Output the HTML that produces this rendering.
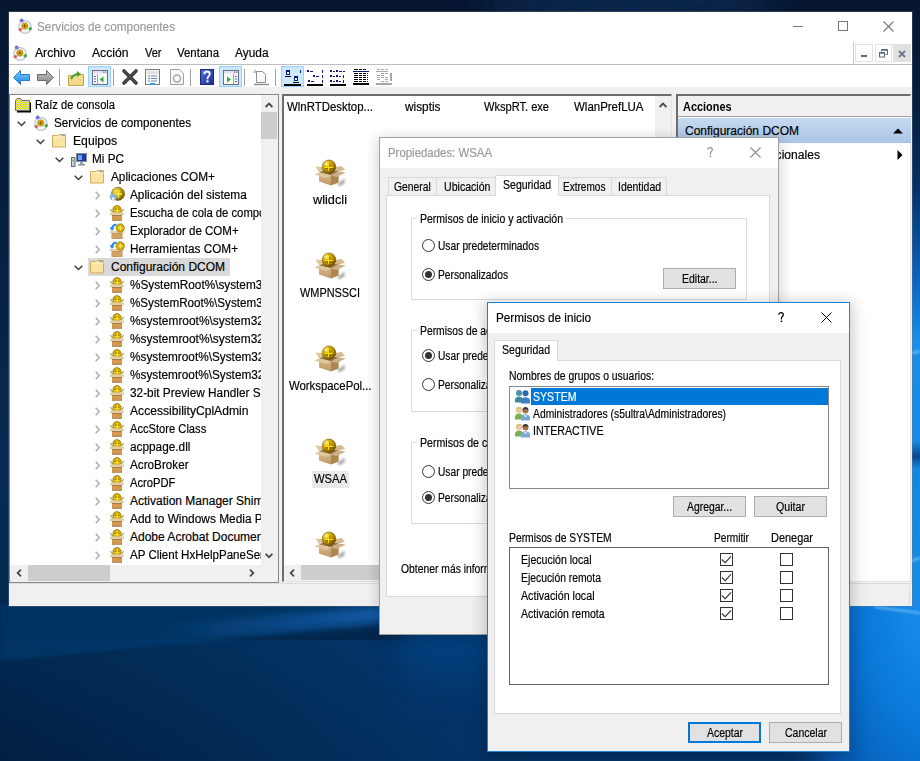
<!DOCTYPE html>
<html><head><meta charset="utf-8">
<style>
*{margin:0;padding:0;box-sizing:border-box}
html,body{width:920px;height:761px;overflow:hidden}
body{position:relative;font-family:"Liberation Sans",sans-serif;font-size:12px;color:#000;background:#0a1a33}
.a{position:absolute;display:block}
.t{position:absolute;white-space:nowrap;line-height:1;transform-origin:0 0;-webkit-text-stroke:.18px currentColor}
svg.a{overflow:visible}
</style></head><body>

<svg class="a" style="left:0px;top:0px;" width="920" height="761" viewBox="0 0 920 761"><defs>
<linearGradient id="dg" x1="0" y1="0" x2="0" y2="761" gradientUnits="userSpaceOnUse">
 <stop offset="0" stop-color="#061630"/><stop offset=".3" stop-color="#07203f"/><stop offset=".6" stop-color="#082a50"/><stop offset=".82" stop-color="#02284e"/><stop offset="1" stop-color="#011c3b"/></linearGradient>
<linearGradient id="sg" x1="150" y1="0" x2="490" y2="0" gradientUnits="userSpaceOnUse"><stop offset="0" stop-color="#1a6ac8" stop-opacity="0"/><stop offset="1" stop-color="#1a70d0" stop-opacity="1"/></linearGradient>
<radialGradient id="rg" cx="930" cy="600" r="330" gradientUnits="userSpaceOnUse" gradientTransform="translate(930 600) scale(.5 1) translate(-930 -600)">
 <stop offset="0" stop-color="#1a90f0"/><stop offset=".4" stop-color="#0a78d8"/><stop offset=".75" stop-color="#0658b0"/><stop offset="1" stop-color="#0a3a80" stop-opacity="0"/></radialGradient>
<linearGradient id="rs" x1="0" y1="0" x2="0" y2="761" gradientUnits="userSpaceOnUse">
 <stop offset="0" stop-color="#061630"/><stop offset=".13" stop-color="#061d3c"/><stop offset=".25" stop-color="#053266"/><stop offset=".37" stop-color="#0a66c4"/><stop offset=".45" stop-color="#1a8ee8"/>
 <stop offset=".58" stop-color="#1a8ae6"/><stop offset=".6" stop-color="#04468e"/><stop offset=".615" stop-color="#1686e0"/><stop offset=".79" stop-color="#1a8ae6"/><stop offset=".9" stop-color="#0a70d0"/><stop offset="1" stop-color="#0550a8"/></linearGradient>
<linearGradient id="vg" x1="0" y1="600" x2="0" y2="720" gradientUnits="userSpaceOnUse"><stop offset="0" stop-color="#04488c"/><stop offset=".35" stop-color="#04488c" stop-opacity=".8"/><stop offset="1" stop-color="#02305f" stop-opacity="0"/></linearGradient>
<linearGradient id="hg" x1="0" y1="0" x2="520" y2="0" gradientUnits="userSpaceOnUse"><stop offset="0" stop-color="#044080" stop-opacity=".1"/><stop offset="1" stop-color="#044080" stop-opacity=".65"/></linearGradient>
<filter id="bl1" x="-50%" y="-50%" width="200%" height="200%"><feGaussianBlur stdDeviation="1.2"/></filter>
<filter id="bl" x="-50%" y="-50%" width="200%" height="200%"><feGaussianBlur stdDeviation="5"/></filter>
<filter id="bl2" x="-50%" y="-50%" width="200%" height="200%"><feGaussianBlur stdDeviation="14"/></filter>
</defs>
<rect width="920" height="761" fill="url(#dg)"/>
<ellipse cx="630" cy="2" rx="150" ry="22" fill="#0d3465" opacity=".55" filter="url(#bl2)"/>
<polygon points="0,604 920,604 920,560 490,614 0,661" fill="#03335f" filter="url(#bl1)"/>
<polygon points="150,644 490,612 490,596 150,626" fill="url(#sg)" filter="url(#bl)"/>
<polygon points="400,610 520,600 520,700 400,725" fill="url(#vg)" filter="url(#bl2)"/>
<rect x="0" y="640" width="920" height="121" fill="url(#hg)"/>
<rect x="600" y="0" width="400" height="800" fill="url(#rg)"/>
<rect x="906" y="0" width="14" height="606" fill="url(#rs)"/>
<path d="M906 355l14-4M906 563l14-5" stroke="#8fd0ff" stroke-width="2" opacity=".7" filter="url(#bl1)"/>
<path d="M875 607l45 6" stroke="#9ad8ff" stroke-width="2" opacity=".6" filter="url(#bl1)"/>
</svg>
<div class="a" style="left:8px;top:11px;width:905px;height:596px;background:rgba(110,120,140,.35);"></div>
<div class="a" style="left:9px;top:12px;width:903px;height:594px;background:#f0f0f0;"></div>
<div class="a" style="left:9px;top:12px;width:903px;height:52px;background:#fff;"></div>
<div class="a" style="left:9px;top:64px;width:903px;height:1px;background:#bdbdbd;"></div>
<div class="a" style="left:9px;top:65px;width:903px;height:22px;background:#fff;"></div>
<div class="a" style="left:9px;top:583px;width:903px;height:1px;background:#dcdcdc;"></div>
<div class="a" style="left:909px;top:585px;width:1px;height:20px;background:#dcdcdc;"></div>
<svg class="a" style="left:17px;top:18px;" width="16" height="16" viewBox="0 0 16 16"><circle cx="8" cy="9" r="6.3" fill="#f2f3f6" stroke="#c3c8d2" stroke-width="1.3"/>
<circle cx="7.8" cy="8" r="3.1" fill="#f0c000" stroke="#9a7000" stroke-width=".7"/>
<path d="M5.9 8h3.8M7.8 6.1v3.8" stroke="#6a4500" stroke-width=".9"/>
<circle cx="4.7" cy="2.4" r="1.9" fill="#6c70e0"/>
<circle cx="3.3" cy="11.6" r="1.7" fill="#d85c5c"/>
<circle cx="13.2" cy="10.8" r="1.7" fill="#44a844"/></svg>
<div class="t" style="left:37px;top:21px;font-size:12px;color:#9a9a9a;transform:scaleX(0.9807);">Servicios de componentes</div>
<div class="a" style="left:793px;top:26px;width:10px;height:1px;background:#777;"></div>
<div class="a" style="left:838px;top:21px;width:10px;height:10px;border:1px solid #777;"></div>
<svg class="a" style="left:883px;top:21px;" width="11" height="11" viewBox="0 0 11 11"><path d="M.5 .5l10 10M10.5 .5l-10 10" stroke="#777" stroke-width="1.1"/></svg>
<svg class="a" style="left:12px;top:45px;" width="16" height="16" viewBox="0 0 16 16"><circle cx="8" cy="9" r="6.3" fill="#f2f3f6" stroke="#c3c8d2" stroke-width="1.3"/>
<circle cx="7.8" cy="8" r="3.1" fill="#f0c000" stroke="#9a7000" stroke-width=".7"/>
<path d="M5.9 8h3.8M7.8 6.1v3.8" stroke="#6a4500" stroke-width=".9"/>
<circle cx="4.7" cy="2.4" r="1.9" fill="#6c70e0"/>
<circle cx="3.3" cy="11.6" r="1.7" fill="#d85c5c"/>
<circle cx="13.2" cy="10.8" r="1.7" fill="#44a844"/></svg>
<div class="t" style="left:35px;top:47px;font-size:12px;color:#000;transform:scaleX(1.0121);">Archivo</div>
<div class="t" style="left:92px;top:47px;font-size:12px;color:#000;transform:scaleX(1.0134);">Acci&oacute;n</div>
<div class="t" style="left:145px;top:47px;font-size:12px;color:#000;transform:scaleX(0.9159);">Ver</div>
<div class="t" style="left:177px;top:47px;font-size:12px;color:#000;transform:scaleX(0.9539);">Ventana</div>
<div class="t" style="left:235px;top:47px;font-size:12px;color:#000;transform:scaleX(0.9912);">Ayuda</div>
<div class="a" style="left:853px;top:42px;width:1px;height:22px;background:#c9c9c9;"></div>
<div class="a" style="left:855px;top:44px;width:18px;height:18px;border:1px solid #e3e3e3;background:#fff;"></div>
<div class="a" style="left:861px;top:55px;width:6px;height:2px;background:#5e6c80;"></div>
<div class="a" style="left:875px;top:44px;width:17px;height:18px;border:1px solid #e3e3e3;background:#fff;"></div>
<svg class="a" style="left:879px;top:49px;" width="9" height="9" viewBox="0 0 9 9"><path d="M2.5 2.5v-2h6v5h-2" fill="none" stroke="#5e6c80"/><rect x=".5" y="3.5" width="5" height="4.5" fill="none" stroke="#5e6c80"/><path d="M.5 4h5M2.5 1h6" stroke="#5e6c80" stroke-width="1.5"/></svg>
<div class="a" style="left:893px;top:44px;width:18px;height:18px;background:#e1e1e1;"></div>
<svg class="a" style="left:898px;top:50px;" width="8" height="8" viewBox="0 0 8 8"><path d="M1 1l6 6M7 1l-6 6" stroke="#6c7a90" stroke-width="1.8"/></svg>
<svg class="a" style="left:13px;top:70px;" width="17" height="15" viewBox="0 0 17 15"><defs><linearGradient id="ab" x1="0" y1="0" x2="0" y2="1"><stop offset="0" stop-color="#7cd0ff"/><stop offset="1" stop-color="#1a80e0"/></linearGradient></defs><path d="M.5 7.5l7-7v4h9v6h-9v4z" fill="url(#ab)" stroke="#2a7ad0"/></svg>
<svg class="a" style="left:37px;top:70px;" width="17" height="15" viewBox="0 0 17 15"><defs><linearGradient id="ag" x1="0" y1="0" x2="0" y2="1"><stop offset="0" stop-color="#c8c8c8"/><stop offset="1" stop-color="#808080"/></linearGradient></defs><path d="M16.5 7.5l-7-7v4h-9v6h9v4z" fill="url(#ag)" stroke="#6a6a6a"/></svg>
<div class="a" style="left:59px;top:69px;width:1px;height:17px;background:#a0a0a0;"></div>
<svg class="a" style="left:68px;top:70px;" width="16" height="16" viewBox="0 0 16 16"><path d="M.5 5.5h5l1-1h9v11h-15z" fill="#f4d88a" stroke="#c8a050"/><path d="M3 9c2-4 5-5 8-5" stroke="#40a030" stroke-width="2" fill="none"/><path d="M9 1l4 3-4 3z" fill="#40a030"/></svg>
<div class="a" style="left:88px;top:66px;width:23px;height:21px;border:1px solid #99d1ff;background:#cce8ff;"></div>
<svg class="a" style="left:92px;top:70px;" width="16" height="15" viewBox="0 0 16 15"><rect x=".5" y=".5" width="15" height="14" fill="#fafafa" stroke="#6a7080"/><rect x="1" y="1" width="14" height="2.5" fill="#dfe3ea"/><rect x="11" y="1.5" width="1.2" height="1.2" fill="#6a7080"/><rect x="13" y="1.5" width="1.2" height="1.2" fill="#6a7080"/><path d="M5.5 4v10" stroke="#9aa0aa"/><path d="M2 6.5h2M2 9h2M2 11.5h2" stroke="#3a70d0"/><path d="M11.5 6.5l-4 3 4 3z" fill="#30b030"/></svg>
<div class="a" style="left:113px;top:69px;width:1px;height:17px;background:#a0a0a0;"></div>
<svg class="a" style="left:122px;top:69px;" width="16" height="16" viewBox="0 0 16 16"><path d="M2 2l12 12M14 2L2 14" stroke="#3c3c3c" stroke-width="3.6" stroke-linecap="round"/><path d="M2.5 2l11 11M13.5 2l-11 11" stroke="#6a6a6a" stroke-width="1" stroke-linecap="round" opacity=".6"/></svg>
<svg class="a" style="left:145px;top:69px;" width="15" height="16" viewBox="0 0 15 16"><rect x=".5" y=".5" width="14" height="15" fill="#f8f8f8" stroke="#7a7a7a"/><rect x="2" y="2" width="11" height="3" fill="#e0e0e0"/><path d="M3 7h2M6 7h6M3 9.5h2M6 9.5h6M3 12h2M6 12h6" stroke="#6a8ac0"/><rect x="5" y="14" width="5" height="2" fill="#30a0e0"/></svg>
<svg class="a" style="left:170px;top:69px;" width="14" height="16" viewBox="0 0 14 16"><path d="M.5 .5h9l4 4v11H.5z" fill="#f8f8f8" stroke="#a0a0a0"/><circle cx="7" cy="9.5" r="3.5" fill="none" stroke="#a8a8a8" stroke-width="1.5"/></svg>
<div class="a" style="left:190px;top:69px;width:1px;height:17px;background:#a0a0a0;"></div>
<svg class="a" style="left:200px;top:69px;" width="14" height="16" viewBox="0 0 14 16"><defs><linearGradient id="hb" x1="0" y1="0" x2="1" y2="1"><stop offset="0" stop-color="#4a70d8"/><stop offset="1" stop-color="#1a2c90"/></linearGradient></defs><rect x=".5" y=".5" width="13" height="15" fill="url(#hb)" stroke="#1a2a80"/><path d="M4.3 5.2C4.3 3.3 5.5 2.5 7 2.5s2.8.8 2.8 2.5c0 2-2.3 2.3-2.3 4.5v.8" fill="none" stroke="#fff" stroke-width="1.8"/><rect x="6.4" y="11.3" width="2.1" height="2.1" fill="#fff"/></svg>
<div class="a" style="left:219px;top:66px;width:23px;height:21px;border:1px solid #99d1ff;background:#cce8ff;"></div>
<svg class="a" style="left:223px;top:70px;" width="16" height="15" viewBox="0 0 16 15"><rect x=".5" y=".5" width="15" height="14" fill="#fafafa" stroke="#6a7080"/><rect x="1" y="1" width="14" height="2.5" fill="#dfe3ea"/><rect x="11" y="1.5" width="1.2" height="1.2" fill="#6a7080"/><rect x="13" y="1.5" width="1.2" height="1.2" fill="#6a7080"/><path d="M10.5 4v10" stroke="#9aa0aa"/><path d="M12 6.5h2M12 9h2M12 11.5h2" stroke="#3a70d0"/><path d="M4 6.5l4 3-4 3z" fill="#30b030"/></svg>
<div class="a" style="left:244px;top:69px;width:1px;height:17px;background:#a0a0a0;"></div>
<svg class="a" style="left:253px;top:69px;" width="16" height="16" viewBox="0 0 16 16"><path d="M3.5 2.5h6l3 3v8h-9z" fill="#fafafa" stroke="#909090"/><path d="M1 15.5h15" stroke="#909090" stroke-width="1.5"/><path d="M2 1l2 2M0 3h3" stroke="#909090"/></svg>
<div class="a" style="left:275px;top:69px;width:1px;height:17px;background:#a0a0a0;"></div>
<div class="a" style="left:281px;top:66px;width:23px;height:21px;border:1px solid #99d1ff;background:#cce8ff;"></div>
<svg class="a" style="left:285px;top:69px;" width="16" height="16" viewBox="0 0 16 16"><g shape-rendering="crispEdges"><rect x="1" y="1" width="4" height="5" fill="#0a1a80"/><rect x="2" y="3" width="1.5" height="2" fill="#fff"/><rect x="0" y="7" width="6" height="1" fill="#000"/><rect x="-1" y="15" width="17" height="2" fill="#000"/><rect x="15" y="1" width="1" height="3" fill="#0a1a80"/><rect x="9" y="7" width="4" height="5" fill="#0a1a80"/><rect x="10" y="9" width="1.5" height="2" fill="#fff"/><rect x="8" y="13" width="6" height="1" fill="#000"/></g></svg>
<svg class="a" style="left:307px;top:69px;" width="16" height="16" viewBox="0 0 16 16"><g shape-rendering="crispEdges"><rect x="0" y="1" width="2" height="2" fill="#0a1a80"/><rect x="3" y="1.5" width="3" height="1" fill="#0a1a80"/><rect x="15" y="1" width="1" height="3" fill="#0a1a80"/><rect x="6" y="6" width="2" height="2" fill="#0a1a80"/><rect x="9" y="6.5" width="3" height="1" fill="#0a1a80"/><rect x="15" y="6" width="1" height="3" fill="#0a1a80"/><rect x="1" y="11" width="2" height="2" fill="#0a1a80"/><rect x="4" y="11.5" width="3" height="1" fill="#0a1a80"/><rect x="15" y="11" width="1" height="3" fill="#0a1a80"/><rect x="0" y="15" width="16" height="2" fill="#000"/></g></svg>
<svg class="a" style="left:330px;top:69px;" width="16" height="16" viewBox="0 0 16 16"><g shape-rendering="crispEdges"><rect x="0" y="1" width="2" height="2" fill="#0a1a80"/><rect x="3" y="1.5" width="2" height="1" fill="#0a1a80"/><rect x="6" y="1" width="2" height="2" fill="#0a1a80"/><rect x="9" y="1.5" width="3" height="1" fill="#0a1a80"/><rect x="13" y="2" width="2" height="1" fill="#0a1a80"/><rect x="0" y="6" width="2" height="2" fill="#0a1a80"/><rect x="3" y="6.5" width="2" height="1" fill="#0a1a80"/><rect x="6" y="6" width="2" height="2" fill="#0a1a80"/><rect x="9" y="6.5" width="2" height="1" fill="#0a1a80"/><rect x="13" y="6" width="1" height="3" fill="#0a1a80"/><rect x="0" y="11" width="2" height="2" fill="#0a1a80"/><rect x="3" y="11.5" width="2" height="1" fill="#0a1a80"/><rect x="6" y="11" width="2" height="2" fill="#0a1a80"/><rect x="9" y="11.5" width="2" height="1" fill="#0a1a80"/><rect x="13" y="11" width="1" height="3" fill="#0a1a80"/><rect x="0" y="15" width="16" height="2" fill="#000"/></g></svg>
<svg class="a" style="left:353px;top:69px;" width="16" height="16" viewBox="0 0 16 16"><g shape-rendering="crispEdges"><rect x="1" y="0" width="4" height="1" fill="#000"/><rect x="6" y="0" width="3" height="1" fill="#000"/><rect x="10" y="0" width="3" height="1" fill="#000"/><rect x="0" y="2" width="16" height="1" fill="#0a1a80"/><rect x="1" y="4" width="4" height="1" fill="#000"/><rect x="6" y="4" width="3" height="1" fill="#000"/><rect x="10" y="4" width="3" height="1" fill="#000"/><rect x="14" y="4" width="1" height="1" fill="#0a1a80"/><rect x="1" y="6" width="4" height="1" fill="#000"/><rect x="6" y="6" width="3" height="1" fill="#000"/><rect x="10" y="6" width="3" height="1" fill="#000"/><rect x="14" y="6" width="1" height="1" fill="#0a1a80"/><rect x="1" y="8" width="4" height="1" fill="#000"/><rect x="6" y="8" width="3" height="1" fill="#000"/><rect x="10" y="8" width="3" height="1" fill="#000"/><rect x="14" y="8" width="1" height="1" fill="#0a1a80"/><rect x="1" y="10" width="4" height="1" fill="#000"/><rect x="6" y="10" width="3" height="1" fill="#000"/><rect x="10" y="10" width="3" height="1" fill="#000"/><rect x="14" y="10" width="1" height="1" fill="#0a1a80"/><rect x="1" y="12" width="4" height="1" fill="#000"/><rect x="6" y="12" width="3" height="1" fill="#000"/><rect x="10" y="12" width="3" height="1" fill="#000"/><rect x="14" y="12" width="1" height="1" fill="#0a1a80"/><rect x="0" y="14" width="16" height="2" fill="#000"/></g></svg>
<svg class="a" style="left:376px;top:69px;" width="16" height="16" viewBox="0 0 16 16"><g shape-rendering="crispEdges"><rect x="1" y="0" width="3" height="1" fill="#a8a8a8"/><rect x="5" y="0" width="3" height="1" fill="#a8a8a8"/><rect x="9" y="0" width="3" height="1" fill="#a8a8a8"/><rect x="0" y="2" width="12" height="1" fill="#a8a8a8"/><rect x="5" y="4" width="3" height="1" fill="#a8a8a8"/><rect x="9" y="4" width="3" height="1" fill="#a8a8a8"/><rect x="1" y="6" width="3" height="1" fill="#a8a8a8"/><rect x="5" y="6" width="3" height="1" fill="#a8a8a8"/><rect x="1" y="8" width="3" height="1" fill="#a8a8a8"/><rect x="5" y="8" width="3" height="1" fill="#a8a8a8"/><rect x="9" y="8" width="3" height="1" fill="#a8a8a8"/><rect x="1" y="10" width="3" height="1" fill="#a8a8a8"/><rect x="9" y="10" width="3" height="1" fill="#a8a8a8"/><rect x="5" y="12" width="3" height="1" fill="#a8a8a8"/><rect x="9" y="12" width="3" height="1" fill="#a8a8a8"/><rect x="14" y="4" width="1.5" height="8" fill="#a8a8a8"/><rect x="0" y="14" width="16" height="2" fill="#a8a8a8"/></g></svg>
<div class="a" style="left:9px;top:94px;width:270px;height:489px;border:1px solid #828790;background:#fff;"></div>
<div class="a" style="left:10px;top:95px;width:251px;height:470px;overflow:hidden">
<svg class="a" style="left:4px;top:2px;" width="16" height="16" viewBox="0 0 16 16"><defs><pattern id="chk" width="2" height="2" patternUnits="userSpaceOnUse"><rect width="2" height="2" fill="#f4f400"/><rect width="1" height="1" fill="#c8c8a0"/><rect x="1" y="1" width="1" height="1" fill="#c8c8a0"/></pattern></defs>
<path d="M2 14.5V4.5l1.5-2h3.5l1.5 2h7.5v10z" fill="#000" transform="translate(1 1)"/>
<path d="M1.5 13.5V3.5l1.5-2h3.5l1.5 2h7.5v10z" fill="url(#chk)" stroke="#707070" stroke-width="1"/></svg>
<div class="t" style="left:25px;top:4px;font-size:12px;color:#000;transform:scaleX(0.9299);">Ra&iacute;z de consola</div>
<svg class="a" style="left:7px;top:26px;" width="9" height="6" viewBox="0 0 9 6"><path d="M.7 .7l3.8 3.8 3.8-3.8" fill="none" stroke="#404040" stroke-width="1.5"/></svg>
<svg class="a" style="left:23px;top:20px;" width="16" height="16" viewBox="0 0 16 16"><circle cx="8" cy="9" r="6.3" fill="#f2f3f6" stroke="#c3c8d2" stroke-width="1.3"/>
<circle cx="7.8" cy="8" r="3.1" fill="#f0c000" stroke="#9a7000" stroke-width=".7"/>
<path d="M5.9 8h3.8M7.8 6.1v3.8" stroke="#6a4500" stroke-width=".9"/>
<circle cx="4.7" cy="2.4" r="1.9" fill="#6c70e0"/>
<circle cx="3.3" cy="11.6" r="1.7" fill="#d85c5c"/>
<circle cx="13.2" cy="10.8" r="1.7" fill="#44a844"/></svg>
<div class="t" style="left:44px;top:22px;font-size:12px;color:#000;transform:scaleX(0.9736);">Servicios de componentes</div>
<svg class="a" style="left:26px;top:44px;" width="9" height="6" viewBox="0 0 9 6"><path d="M.7 .7l3.8 3.8 3.8-3.8" fill="none" stroke="#404040" stroke-width="1.5"/></svg>
<svg class="a" style="left:42px;top:38px;" width="16" height="16" viewBox="0 0 16 16"><path d="M.5 2.5h5.5l1-1h6.5v12.5h-13z" fill="#f8e3a0" stroke="#d4ac58"/>
<path d="M1 4h12.5" stroke="#fdf3d0" stroke-width="1"/><rect x="9.5" y="2" width="3" height="1.2" fill="#6aa8e8"/></svg>
<div class="t" style="left:63px;top:40px;font-size:12px;color:#000;transform:scaleX(1.0148);">Equipos</div>
<svg class="a" style="left:45px;top:62px;" width="9" height="6" viewBox="0 0 9 6"><path d="M.7 .7l3.8 3.8 3.8-3.8" fill="none" stroke="#404040" stroke-width="1.5"/></svg>
<svg class="a" style="left:61px;top:56px;" width="16" height="16" viewBox="0 0 16 16"><rect x="5.5" y="2.5" width="10" height="8" fill="#1a3ca8" stroke="#8a8f98"/>
<rect x="7" y="4" width="4" height="5" fill="#6fa0ff"/>
<rect x="9" y="11" width="3" height="2" fill="#9aa0a8"/><rect x="7" y="13" width="7" height="1.5" fill="#8a9098"/>
<rect x="0.5" y="6.5" width="3.5" height="9" fill="#c8ccd0" stroke="#6a6e74"/>
<rect x="1.5" y="9" width="1.5" height="1.2" fill="#30c030"/></svg>
<div class="t" style="left:82px;top:58px;font-size:12px;color:#000;transform:scaleX(0.9794);">Mi PC</div>
<svg class="a" style="left:64px;top:80px;" width="9" height="6" viewBox="0 0 9 6"><path d="M.7 .7l3.8 3.8 3.8-3.8" fill="none" stroke="#404040" stroke-width="1.5"/></svg>
<svg class="a" style="left:80px;top:74px;" width="16" height="16" viewBox="0 0 16 16"><path d="M.5 2.5h5.5l1-1h6.5v12.5h-13z" fill="#f8e3a0" stroke="#d4ac58"/>
<path d="M1 4h12.5" stroke="#fdf3d0" stroke-width="1"/><rect x="9.5" y="2" width="3" height="1.2" fill="#6aa8e8"/></svg>
<div class="t" style="left:101px;top:76px;font-size:12px;color:#000;transform:scaleX(0.9837);">Aplicaciones COM+</div>
<svg class="a" style="left:85px;top:96px;" width="6" height="9" viewBox="0 0 6 9"><path d="M.7 .7l3.6 3.8-3.6 3.8" fill="none" stroke="#a6a6a6" stroke-width="1.3"/></svg>
<svg class="a" style="left:99px;top:92px;" width="16" height="16" viewBox="0 0 16 16"><defs><radialGradient id="sg2" cx=".35" cy=".3" r=".8"><stop offset="0" stop-color="#f8e060"/><stop offset=".5" stop-color="#c09800"/><stop offset="1" stop-color="#6a5000"/></radialGradient></defs>
<circle cx="9" cy="6.8" r="6.6" fill="url(#sg2)" stroke="#5a4400" stroke-width=".5"/>
<path d="M5.5 7h7.5M9.5 3v7.8" stroke="#fff040" stroke-width="1.5"/>
<path d="M4 9.2l.8 1.5 1.6-.5.3 1.6 1.5.6-.8 1.4.8 1.4-1.5.6-.3 1.6-1.6-.5L4 18l-.8-1.5-1.6.5-.3-1.6-1.5-.6.8-1.4-.8-1.4 1.5-.6.3-1.6 1.6.5z" fill="#8ab4e0" transform="translate(.5 -2.5) scale(.92)"/>
<circle cx="4.2" cy="11.5" r="1.2" fill="#fff"/></svg>
<div class="t" style="left:120px;top:94px;font-size:12px;color:#000;transform:scaleX(0.9830);">Aplicaci&oacute;n del sistema</div>
<svg class="a" style="left:85px;top:114px;" width="6" height="9" viewBox="0 0 6 9"><path d="M.7 .7l3.6 3.8-3.6 3.8" fill="none" stroke="#a6a6a6" stroke-width="1.3"/></svg>
<svg class="a" style="left:99px;top:110px;" width="16" height="16" viewBox="0 0 16 16"><path d="M1.3 4.2L4 7.5M14.7 4.2L12 7.5" stroke="#b89060" stroke-width="1.1"/>
<circle cx="8" cy="4.8" r="4.2" fill="#d8b000" stroke="#7a6000" stroke-width=".6"/>
<path d="M5.5 5.2h5M8.2 2.3v5" stroke="#f8e830" stroke-width="1.1"/><path d="M5.5 4.2h2M9 4.2h1.5" stroke="#6a4a00" stroke-width=".7"/>
<rect x="1" y="7.5" width="14" height="2.6" fill="#e2cda6"/>
<rect x="3" y="10.1" width="10" height="5.5" fill="#d49a52"/>
<path d="M3 10.5h10" stroke="#9a7040" stroke-width=".8"/><path d="M3 15.3h10" stroke="#9a7040" stroke-width=".7"/></svg>
<div class="t" style="left:120px;top:112px;font-size:12px;color:#000;transform:scaleX(0.9390);">Escucha de cola de componentes</div>
<svg class="a" style="left:85px;top:132px;" width="6" height="9" viewBox="0 0 6 9"><path d="M.7 .7l3.6 3.8-3.6 3.8" fill="none" stroke="#a6a6a6" stroke-width="1.3"/></svg>
<svg class="a" style="left:99px;top:128px;" width="16" height="16" viewBox="0 0 16 16"><rect x="1" y="8" width="14" height="2" fill="#e6cfa8"/>
<rect x="2.5" y="10" width="11" height="6" fill="#c9965a"/>
<path d="M2.5 12h11M2.5 14h11" stroke="#e0b880" stroke-width=".7"/>
<circle cx="11.2" cy="5" r="4.2" fill="#d6ac00" stroke="#8a6800" stroke-width=".6"/>
<path d="M8.8 5h4.8M11.2 2.6v4.8" stroke="#fff070" stroke-width="1.1"/>
<path d="M7.5 1.8C5 1.5 3.5 3 3 5.5" fill="none" stroke="#2a86e0" stroke-width="2"/>
<path d="M0.5 4.5l2.5 3.5 2.5-3.2z" fill="#2a86e0"/></svg>
<div class="t" style="left:120px;top:130px;font-size:12px;color:#000;transform:scaleX(0.9615);">Explorador de COM+</div>
<svg class="a" style="left:85px;top:150px;" width="6" height="9" viewBox="0 0 6 9"><path d="M.7 .7l3.6 3.8-3.6 3.8" fill="none" stroke="#a6a6a6" stroke-width="1.3"/></svg>
<svg class="a" style="left:99px;top:146px;" width="16" height="16" viewBox="0 0 16 16"><rect x="1" y="8" width="14" height="2" fill="#e6cfa8"/>
<rect x="2.5" y="10" width="11" height="6" fill="#c9965a"/>
<path d="M2.5 12h11M2.5 14h11" stroke="#e0b880" stroke-width=".7"/>
<circle cx="11.2" cy="5" r="4.2" fill="#d6ac00" stroke="#8a6800" stroke-width=".6"/>
<path d="M8.8 5h4.8M11.2 2.6v4.8" stroke="#fff070" stroke-width="1.1"/>
<path d="M7.5 1.8C5 1.5 3.5 3 3 5.5" fill="none" stroke="#2a86e0" stroke-width="2"/>
<path d="M0.5 4.5l2.5 3.5 2.5-3.2z" fill="#2a86e0"/></svg>
<div class="t" style="left:120px;top:148px;font-size:12px;color:#000;transform:scaleX(0.9785);">Herramientas COM+</div>
<div class="a" style="left:78px;top:163px;width:142px;height:18px;background:#d9d9d9;"></div>
<svg class="a" style="left:64px;top:170px;" width="9" height="6" viewBox="0 0 9 6"><path d="M.7 .7l3.8 3.8 3.8-3.8" fill="none" stroke="#404040" stroke-width="1.5"/></svg>
<svg class="a" style="left:80px;top:164px;" width="16" height="16" viewBox="0 0 16 16"><path d="M.5 2.5h5.5l1-1h6.5v12.5h-13z" fill="#f8e3a0" stroke="#d4ac58"/>
<path d="M1 4h12.5" stroke="#fdf3d0" stroke-width="1"/><rect x="9.5" y="2" width="3" height="1.2" fill="#6aa8e8"/></svg>
<div class="t" style="left:101px;top:166px;font-size:12px;color:#000;">Configuraci&oacute;n DCOM</div>
<svg class="a" style="left:85px;top:186px;" width="6" height="9" viewBox="0 0 6 9"><path d="M.7 .7l3.6 3.8-3.6 3.8" fill="none" stroke="#a6a6a6" stroke-width="1.3"/></svg>
<svg class="a" style="left:99px;top:182px;" width="16" height="16" viewBox="0 0 16 16"><path d="M1.3 4.2L4 7.5M14.7 4.2L12 7.5" stroke="#b89060" stroke-width="1.1"/>
<circle cx="8" cy="4.8" r="4.2" fill="#d8b000" stroke="#7a6000" stroke-width=".6"/>
<path d="M5.5 5.2h5M8.2 2.3v5" stroke="#f8e830" stroke-width="1.1"/><path d="M5.5 4.2h2M9 4.2h1.5" stroke="#6a4a00" stroke-width=".7"/>
<rect x="1" y="7.5" width="14" height="2.6" fill="#e2cda6"/>
<rect x="3" y="10.1" width="10" height="5.5" fill="#d49a52"/>
<path d="M3 10.5h10" stroke="#9a7040" stroke-width=".8"/><path d="M3 15.3h10" stroke="#9a7040" stroke-width=".7"/></svg>
<div class="t" style="left:120px;top:184px;font-size:12px;color:#000;transform:scaleX(0.9820);">%SystemRoot%\system32\</div>
<svg class="a" style="left:85px;top:204px;" width="6" height="9" viewBox="0 0 6 9"><path d="M.7 .7l3.6 3.8-3.6 3.8" fill="none" stroke="#a6a6a6" stroke-width="1.3"/></svg>
<svg class="a" style="left:99px;top:200px;" width="16" height="16" viewBox="0 0 16 16"><path d="M1.3 4.2L4 7.5M14.7 4.2L12 7.5" stroke="#b89060" stroke-width="1.1"/>
<circle cx="8" cy="4.8" r="4.2" fill="#d8b000" stroke="#7a6000" stroke-width=".6"/>
<path d="M5.5 5.2h5M8.2 2.3v5" stroke="#f8e830" stroke-width="1.1"/><path d="M5.5 4.2h2M9 4.2h1.5" stroke="#6a4a00" stroke-width=".7"/>
<rect x="1" y="7.5" width="14" height="2.6" fill="#e2cda6"/>
<rect x="3" y="10.1" width="10" height="5.5" fill="#d49a52"/>
<path d="M3 10.5h10" stroke="#9a7040" stroke-width=".8"/><path d="M3 15.3h10" stroke="#9a7040" stroke-width=".7"/></svg>
<div class="t" style="left:120px;top:202px;font-size:12px;color:#000;transform:scaleX(0.9700);">%SystemRoot%\System32\</div>
<svg class="a" style="left:85px;top:222px;" width="6" height="9" viewBox="0 0 6 9"><path d="M.7 .7l3.6 3.8-3.6 3.8" fill="none" stroke="#a6a6a6" stroke-width="1.3"/></svg>
<svg class="a" style="left:99px;top:218px;" width="16" height="16" viewBox="0 0 16 16"><path d="M1.3 4.2L4 7.5M14.7 4.2L12 7.5" stroke="#b89060" stroke-width="1.1"/>
<circle cx="8" cy="4.8" r="4.2" fill="#d8b000" stroke="#7a6000" stroke-width=".6"/>
<path d="M5.5 5.2h5M8.2 2.3v5" stroke="#f8e830" stroke-width="1.1"/><path d="M5.5 4.2h2M9 4.2h1.5" stroke="#6a4a00" stroke-width=".7"/>
<rect x="1" y="7.5" width="14" height="2.6" fill="#e2cda6"/>
<rect x="3" y="10.1" width="10" height="5.5" fill="#d49a52"/>
<path d="M3 10.5h10" stroke="#9a7040" stroke-width=".8"/><path d="M3 15.3h10" stroke="#9a7040" stroke-width=".7"/></svg>
<div class="t" style="left:120px;top:220px;font-size:12px;color:#000;transform:scaleX(0.9940);">%systemroot%\system32\</div>
<svg class="a" style="left:85px;top:240px;" width="6" height="9" viewBox="0 0 6 9"><path d="M.7 .7l3.6 3.8-3.6 3.8" fill="none" stroke="#a6a6a6" stroke-width="1.3"/></svg>
<svg class="a" style="left:99px;top:236px;" width="16" height="16" viewBox="0 0 16 16"><path d="M1.3 4.2L4 7.5M14.7 4.2L12 7.5" stroke="#b89060" stroke-width="1.1"/>
<circle cx="8" cy="4.8" r="4.2" fill="#d8b000" stroke="#7a6000" stroke-width=".6"/>
<path d="M5.5 5.2h5M8.2 2.3v5" stroke="#f8e830" stroke-width="1.1"/><path d="M5.5 4.2h2M9 4.2h1.5" stroke="#6a4a00" stroke-width=".7"/>
<rect x="1" y="7.5" width="14" height="2.6" fill="#e2cda6"/>
<rect x="3" y="10.1" width="10" height="5.5" fill="#d49a52"/>
<path d="M3 10.5h10" stroke="#9a7040" stroke-width=".8"/><path d="M3 15.3h10" stroke="#9a7040" stroke-width=".7"/></svg>
<div class="t" style="left:120px;top:238px;font-size:12px;color:#000;transform:scaleX(0.9940);">%systemroot%\system32\</div>
<svg class="a" style="left:85px;top:258px;" width="6" height="9" viewBox="0 0 6 9"><path d="M.7 .7l3.6 3.8-3.6 3.8" fill="none" stroke="#a6a6a6" stroke-width="1.3"/></svg>
<svg class="a" style="left:99px;top:254px;" width="16" height="16" viewBox="0 0 16 16"><path d="M1.3 4.2L4 7.5M14.7 4.2L12 7.5" stroke="#b89060" stroke-width="1.1"/>
<circle cx="8" cy="4.8" r="4.2" fill="#d8b000" stroke="#7a6000" stroke-width=".6"/>
<path d="M5.5 5.2h5M8.2 2.3v5" stroke="#f8e830" stroke-width="1.1"/><path d="M5.5 4.2h2M9 4.2h1.5" stroke="#6a4a00" stroke-width=".7"/>
<rect x="1" y="7.5" width="14" height="2.6" fill="#e2cda6"/>
<rect x="3" y="10.1" width="10" height="5.5" fill="#d49a52"/>
<path d="M3 10.5h10" stroke="#9a7040" stroke-width=".8"/><path d="M3 15.3h10" stroke="#9a7040" stroke-width=".7"/></svg>
<div class="t" style="left:120px;top:256px;font-size:12px;color:#000;transform:scaleX(0.9830);">%systemroot%\System32\</div>
<svg class="a" style="left:85px;top:276px;" width="6" height="9" viewBox="0 0 6 9"><path d="M.7 .7l3.6 3.8-3.6 3.8" fill="none" stroke="#a6a6a6" stroke-width="1.3"/></svg>
<svg class="a" style="left:99px;top:272px;" width="16" height="16" viewBox="0 0 16 16"><path d="M1.3 4.2L4 7.5M14.7 4.2L12 7.5" stroke="#b89060" stroke-width="1.1"/>
<circle cx="8" cy="4.8" r="4.2" fill="#d8b000" stroke="#7a6000" stroke-width=".6"/>
<path d="M5.5 5.2h5M8.2 2.3v5" stroke="#f8e830" stroke-width="1.1"/><path d="M5.5 4.2h2M9 4.2h1.5" stroke="#6a4a00" stroke-width=".7"/>
<rect x="1" y="7.5" width="14" height="2.6" fill="#e2cda6"/>
<rect x="3" y="10.1" width="10" height="5.5" fill="#d49a52"/>
<path d="M3 10.5h10" stroke="#9a7040" stroke-width=".8"/><path d="M3 15.3h10" stroke="#9a7040" stroke-width=".7"/></svg>
<div class="t" style="left:120px;top:274px;font-size:12px;color:#000;transform:scaleX(0.9830);">%systemroot%\System32\</div>
<svg class="a" style="left:85px;top:294px;" width="6" height="9" viewBox="0 0 6 9"><path d="M.7 .7l3.6 3.8-3.6 3.8" fill="none" stroke="#a6a6a6" stroke-width="1.3"/></svg>
<svg class="a" style="left:99px;top:290px;" width="16" height="16" viewBox="0 0 16 16"><path d="M1.3 4.2L4 7.5M14.7 4.2L12 7.5" stroke="#b89060" stroke-width="1.1"/>
<circle cx="8" cy="4.8" r="4.2" fill="#d8b000" stroke="#7a6000" stroke-width=".6"/>
<path d="M5.5 5.2h5M8.2 2.3v5" stroke="#f8e830" stroke-width="1.1"/><path d="M5.5 4.2h2M9 4.2h1.5" stroke="#6a4a00" stroke-width=".7"/>
<rect x="1" y="7.5" width="14" height="2.6" fill="#e2cda6"/>
<rect x="3" y="10.1" width="10" height="5.5" fill="#d49a52"/>
<path d="M3 10.5h10" stroke="#9a7040" stroke-width=".8"/><path d="M3 15.3h10" stroke="#9a7040" stroke-width=".7"/></svg>
<div class="t" style="left:120px;top:292px;font-size:12px;color:#000;transform:scaleX(0.9840);">32-bit Preview Handler Surrogate</div>
<svg class="a" style="left:85px;top:312px;" width="6" height="9" viewBox="0 0 6 9"><path d="M.7 .7l3.6 3.8-3.6 3.8" fill="none" stroke="#a6a6a6" stroke-width="1.3"/></svg>
<svg class="a" style="left:99px;top:308px;" width="16" height="16" viewBox="0 0 16 16"><path d="M1.3 4.2L4 7.5M14.7 4.2L12 7.5" stroke="#b89060" stroke-width="1.1"/>
<circle cx="8" cy="4.8" r="4.2" fill="#d8b000" stroke="#7a6000" stroke-width=".6"/>
<path d="M5.5 5.2h5M8.2 2.3v5" stroke="#f8e830" stroke-width="1.1"/><path d="M5.5 4.2h2M9 4.2h1.5" stroke="#6a4a00" stroke-width=".7"/>
<rect x="1" y="7.5" width="14" height="2.6" fill="#e2cda6"/>
<rect x="3" y="10.1" width="10" height="5.5" fill="#d49a52"/>
<path d="M3 10.5h10" stroke="#9a7040" stroke-width=".8"/><path d="M3 15.3h10" stroke="#9a7040" stroke-width=".7"/></svg>
<div class="t" style="left:120px;top:310px;font-size:12px;color:#000;transform:scaleX(1.0090);">AccessibilityCplAdmin</div>
<svg class="a" style="left:85px;top:330px;" width="6" height="9" viewBox="0 0 6 9"><path d="M.7 .7l3.6 3.8-3.6 3.8" fill="none" stroke="#a6a6a6" stroke-width="1.3"/></svg>
<svg class="a" style="left:99px;top:326px;" width="16" height="16" viewBox="0 0 16 16"><path d="M1.3 4.2L4 7.5M14.7 4.2L12 7.5" stroke="#b89060" stroke-width="1.1"/>
<circle cx="8" cy="4.8" r="4.2" fill="#d8b000" stroke="#7a6000" stroke-width=".6"/>
<path d="M5.5 5.2h5M8.2 2.3v5" stroke="#f8e830" stroke-width="1.1"/><path d="M5.5 4.2h2M9 4.2h1.5" stroke="#6a4a00" stroke-width=".7"/>
<rect x="1" y="7.5" width="14" height="2.6" fill="#e2cda6"/>
<rect x="3" y="10.1" width="10" height="5.5" fill="#d49a52"/>
<path d="M3 10.5h10" stroke="#9a7040" stroke-width=".8"/><path d="M3 15.3h10" stroke="#9a7040" stroke-width=".7"/></svg>
<div class="t" style="left:120px;top:328px;font-size:12px;color:#000;transform:scaleX(0.9290);">AccStore Class</div>
<svg class="a" style="left:85px;top:348px;" width="6" height="9" viewBox="0 0 6 9"><path d="M.7 .7l3.6 3.8-3.6 3.8" fill="none" stroke="#a6a6a6" stroke-width="1.3"/></svg>
<svg class="a" style="left:99px;top:344px;" width="16" height="16" viewBox="0 0 16 16"><path d="M1.3 4.2L4 7.5M14.7 4.2L12 7.5" stroke="#b89060" stroke-width="1.1"/>
<circle cx="8" cy="4.8" r="4.2" fill="#d8b000" stroke="#7a6000" stroke-width=".6"/>
<path d="M5.5 5.2h5M8.2 2.3v5" stroke="#f8e830" stroke-width="1.1"/><path d="M5.5 4.2h2M9 4.2h1.5" stroke="#6a4a00" stroke-width=".7"/>
<rect x="1" y="7.5" width="14" height="2.6" fill="#e2cda6"/>
<rect x="3" y="10.1" width="10" height="5.5" fill="#d49a52"/>
<path d="M3 10.5h10" stroke="#9a7040" stroke-width=".8"/><path d="M3 15.3h10" stroke="#9a7040" stroke-width=".7"/></svg>
<div class="t" style="left:120px;top:346px;font-size:12px;color:#000;transform:scaleX(0.9840);">acppage.dll</div>
<svg class="a" style="left:85px;top:366px;" width="6" height="9" viewBox="0 0 6 9"><path d="M.7 .7l3.6 3.8-3.6 3.8" fill="none" stroke="#a6a6a6" stroke-width="1.3"/></svg>
<svg class="a" style="left:99px;top:362px;" width="16" height="16" viewBox="0 0 16 16"><path d="M1.3 4.2L4 7.5M14.7 4.2L12 7.5" stroke="#b89060" stroke-width="1.1"/>
<circle cx="8" cy="4.8" r="4.2" fill="#d8b000" stroke="#7a6000" stroke-width=".6"/>
<path d="M5.5 5.2h5M8.2 2.3v5" stroke="#f8e830" stroke-width="1.1"/><path d="M5.5 4.2h2M9 4.2h1.5" stroke="#6a4a00" stroke-width=".7"/>
<rect x="1" y="7.5" width="14" height="2.6" fill="#e2cda6"/>
<rect x="3" y="10.1" width="10" height="5.5" fill="#d49a52"/>
<path d="M3 10.5h10" stroke="#9a7040" stroke-width=".8"/><path d="M3 15.3h10" stroke="#9a7040" stroke-width=".7"/></svg>
<div class="t" style="left:120px;top:364px;font-size:12px;color:#000;transform:scaleX(0.9760);">AcroBroker</div>
<svg class="a" style="left:85px;top:384px;" width="6" height="9" viewBox="0 0 6 9"><path d="M.7 .7l3.6 3.8-3.6 3.8" fill="none" stroke="#a6a6a6" stroke-width="1.3"/></svg>
<svg class="a" style="left:99px;top:380px;" width="16" height="16" viewBox="0 0 16 16"><path d="M1.3 4.2L4 7.5M14.7 4.2L12 7.5" stroke="#b89060" stroke-width="1.1"/>
<circle cx="8" cy="4.8" r="4.2" fill="#d8b000" stroke="#7a6000" stroke-width=".6"/>
<path d="M5.5 5.2h5M8.2 2.3v5" stroke="#f8e830" stroke-width="1.1"/><path d="M5.5 4.2h2M9 4.2h1.5" stroke="#6a4a00" stroke-width=".7"/>
<rect x="1" y="7.5" width="14" height="2.6" fill="#e2cda6"/>
<rect x="3" y="10.1" width="10" height="5.5" fill="#d49a52"/>
<path d="M3 10.5h10" stroke="#9a7040" stroke-width=".8"/><path d="M3 15.3h10" stroke="#9a7040" stroke-width=".7"/></svg>
<div class="t" style="left:120px;top:382px;font-size:12px;color:#000;transform:scaleX(0.9330);">AcroPDF</div>
<svg class="a" style="left:85px;top:402px;" width="6" height="9" viewBox="0 0 6 9"><path d="M.7 .7l3.6 3.8-3.6 3.8" fill="none" stroke="#a6a6a6" stroke-width="1.3"/></svg>
<svg class="a" style="left:99px;top:398px;" width="16" height="16" viewBox="0 0 16 16"><path d="M1.3 4.2L4 7.5M14.7 4.2L12 7.5" stroke="#b89060" stroke-width="1.1"/>
<circle cx="8" cy="4.8" r="4.2" fill="#d8b000" stroke="#7a6000" stroke-width=".6"/>
<path d="M5.5 5.2h5M8.2 2.3v5" stroke="#f8e830" stroke-width="1.1"/><path d="M5.5 4.2h2M9 4.2h1.5" stroke="#6a4a00" stroke-width=".7"/>
<rect x="1" y="7.5" width="14" height="2.6" fill="#e2cda6"/>
<rect x="3" y="10.1" width="10" height="5.5" fill="#d49a52"/>
<path d="M3 10.5h10" stroke="#9a7040" stroke-width=".8"/><path d="M3 15.3h10" stroke="#9a7040" stroke-width=".7"/></svg>
<div class="t" style="left:120px;top:400px;font-size:12px;color:#000;">Activation Manager Shim</div>
<svg class="a" style="left:85px;top:420px;" width="6" height="9" viewBox="0 0 6 9"><path d="M.7 .7l3.6 3.8-3.6 3.8" fill="none" stroke="#a6a6a6" stroke-width="1.3"/></svg>
<svg class="a" style="left:99px;top:416px;" width="16" height="16" viewBox="0 0 16 16"><path d="M1.3 4.2L4 7.5M14.7 4.2L12 7.5" stroke="#b89060" stroke-width="1.1"/>
<circle cx="8" cy="4.8" r="4.2" fill="#d8b000" stroke="#7a6000" stroke-width=".6"/>
<path d="M5.5 5.2h5M8.2 2.3v5" stroke="#f8e830" stroke-width="1.1"/><path d="M5.5 4.2h2M9 4.2h1.5" stroke="#6a4a00" stroke-width=".7"/>
<rect x="1" y="7.5" width="14" height="2.6" fill="#e2cda6"/>
<rect x="3" y="10.1" width="10" height="5.5" fill="#d49a52"/>
<path d="M3 10.5h10" stroke="#9a7040" stroke-width=".8"/><path d="M3 15.3h10" stroke="#9a7040" stroke-width=".7"/></svg>
<div class="t" style="left:120px;top:418px;font-size:12px;color:#000;transform:scaleX(0.9900);">Add to Windows Media Player</div>
<svg class="a" style="left:85px;top:438px;" width="6" height="9" viewBox="0 0 6 9"><path d="M.7 .7l3.6 3.8-3.6 3.8" fill="none" stroke="#a6a6a6" stroke-width="1.3"/></svg>
<svg class="a" style="left:99px;top:434px;" width="16" height="16" viewBox="0 0 16 16"><path d="M1.3 4.2L4 7.5M14.7 4.2L12 7.5" stroke="#b89060" stroke-width="1.1"/>
<circle cx="8" cy="4.8" r="4.2" fill="#d8b000" stroke="#7a6000" stroke-width=".6"/>
<path d="M5.5 5.2h5M8.2 2.3v5" stroke="#f8e830" stroke-width="1.1"/><path d="M5.5 4.2h2M9 4.2h1.5" stroke="#6a4a00" stroke-width=".7"/>
<rect x="1" y="7.5" width="14" height="2.6" fill="#e2cda6"/>
<rect x="3" y="10.1" width="10" height="5.5" fill="#d49a52"/>
<path d="M3 10.5h10" stroke="#9a7040" stroke-width=".8"/><path d="M3 15.3h10" stroke="#9a7040" stroke-width=".7"/></svg>
<div class="t" style="left:120px;top:436px;font-size:12px;color:#000;">Adobe Acrobat Document</div>
<svg class="a" style="left:85px;top:456px;" width="6" height="9" viewBox="0 0 6 9"><path d="M.7 .7l3.6 3.8-3.6 3.8" fill="none" stroke="#a6a6a6" stroke-width="1.3"/></svg>
<svg class="a" style="left:99px;top:452px;" width="16" height="16" viewBox="0 0 16 16"><path d="M1.3 4.2L4 7.5M14.7 4.2L12 7.5" stroke="#b89060" stroke-width="1.1"/>
<circle cx="8" cy="4.8" r="4.2" fill="#d8b000" stroke="#7a6000" stroke-width=".6"/>
<path d="M5.5 5.2h5M8.2 2.3v5" stroke="#f8e830" stroke-width="1.1"/><path d="M5.5 4.2h2M9 4.2h1.5" stroke="#6a4a00" stroke-width=".7"/>
<rect x="1" y="7.5" width="14" height="2.6" fill="#e2cda6"/>
<rect x="3" y="10.1" width="10" height="5.5" fill="#d49a52"/>
<path d="M3 10.5h10" stroke="#9a7040" stroke-width=".8"/><path d="M3 15.3h10" stroke="#9a7040" stroke-width=".7"/></svg>
<div class="t" style="left:120px;top:454px;font-size:12px;color:#000;transform:scaleX(0.9620);">AP Client HxHelpPaneServer</div>
</div>
<div class="a" style="left:261px;top:95px;width:17px;height:470px;background:#f0f0f0;"></div>
<div class="a" style="left:261px;top:112px;width:16px;height:27px;background:#cdcdcd;"></div>
<svg class="a" style="left:265px;top:102px;" width="8" height="6" viewBox="0 0 8 6"><path d="M.6 5l3.4-3.4 3.4 3.4" fill="none" stroke="#4a4a4a" stroke-width="1.8"/></svg>
<svg class="a" style="left:265px;top:553px;" width="8" height="6" viewBox="0 0 8 6"><path d="M.6 .8l3.4 3.4 3.4-3.4" fill="none" stroke="#4a4a4a" stroke-width="1.8"/></svg>
<div class="a" style="left:10px;top:565px;width:251px;height:17px;background:#f0f0f0;"></div>
<div class="a" style="left:28px;top:565px;width:82px;height:16px;background:#cdcdcd;"></div>
<div class="a" style="left:261px;top:565px;width:17px;height:17px;background:#f0f0f0;"></div>
<svg class="a" style="left:16px;top:569px;" width="6" height="8" viewBox="0 0 6 8"><path d="M5 .6l-3.4 3.4 3.4 3.4" fill="none" stroke="#4a4a4a" stroke-width="1.8"/></svg>
<svg class="a" style="left:249px;top:569px;" width="6" height="8" viewBox="0 0 6 8"><path d="M1 .6l3.4 3.4-3.4 3.4" fill="none" stroke="#4a4a4a" stroke-width="1.8"/></svg>
<div class="a" style="left:282px;top:94px;width:390px;height:488px;background:#fff;border-top:2px solid #6d6d6d;border-left:2px solid #6d6d6d;border-right:1px solid #e3e3e3;border-bottom:1px solid #e3e3e3"></div>
<div class="t" style="left:287px;top:101px;font-size:12px;color:#000;transform:scaleX(0.9508);">WlnRTDesktop...</div>
<div class="t" style="left:405px;top:101px;font-size:12px;color:#000;transform:scaleX(0.9857);">wisptis</div>
<div class="t" style="left:484px;top:101px;font-size:12px;color:#000;transform:scaleX(0.9226);">WkspRT. exe</div>
<div class="t" style="left:574px;top:101px;font-size:12px;color:#000;transform:scaleX(0.9561);">WlanPrefLUA</div>
<div class="a" style="left:655px;top:96px;width:16px;height:486px;background:#f0f0f0;"></div>
<svg class="a" style="left:659px;top:102px;" width="8" height="6" viewBox="0 0 8 6"><path d="M.6 5l3.4-3.4 3.4 3.4" fill="none" stroke="#4a4a4a" stroke-width="1.8"/></svg>
<svg class="a" style="left:314px;top:157px;" width="32" height="32" viewBox="0 0 32 32"><defs><radialGradient id="cg" cx=".32" cy=".28" r=".8"><stop offset="0" stop-color="#fff6b0"/><stop offset=".3" stop-color="#dcb400"/><stop offset=".75" stop-color="#a07800"/><stop offset="1" stop-color="#5a4200"/></radialGradient>
<linearGradient id="ff" x1="0" y1="0" x2="0" y2="1"><stop offset="0" stop-color="#d8bc8c"/><stop offset="1" stop-color="#c09868"/></linearGradient>
<filter id="sb" x="-50%" y="-50%" width="200%" height="200%"><feGaussianBlur stdDeviation=".9"/></filter></defs>
<path d="M23.5 27 L30.5 21.5 L30.5 26.5 L25 29.5z" fill="#606060" opacity=".55" filter="url(#sb)"/>
<path d="M5 15.5 L12 11.5 L24.7 14.5 L17 18.5z" fill="#9a7850"/>
<path d="M5 15.3 L1.5 9.5 L11 10.2 L12.5 11.5z" fill="#e0c89e"/>
<path d="M13 11.5 L27.5 9 L31 12.8 L24.7 14.5z" fill="#d6ba8e"/>
<circle cx="15" cy="9.8" r="6.8" fill="url(#cg)" stroke="#5a4400" stroke-width=".5"/>
<path d="M11.2 11.6h8.3M15.6 6.4v8.2" stroke="#5a3800" stroke-width="1.1" opacity=".8"/>
<path d="M10.7 10.6h8.3M14.7 5.9v8.2" stroke="#ffe400" stroke-width="1.2"/>
<path d="M5 15.5 L17 18.5 L17 28.5 L5 24.5z" fill="url(#ff)"/>
<path d="M17 18.5 L24.7 14.5 L24.7 25.5 L17 28.5z" fill="#ad8752"/>
<path d="M5 15.5 L0.5 17.5 L12 21 L17 18.5z" fill="#e0c89c"/>
<path d="M24.7 14.5 L31.8 15.5 L22.5 20 L17 18.5z" fill="#ccb084"/></svg>
<div class="t" style="left:313px;top:194px;font-size:12px;color:#000;transform:scaleX(1.0615);">wlidcli</div>
<svg class="a" style="left:314px;top:250px;" width="32" height="32" viewBox="0 0 32 32"><defs><radialGradient id="cg" cx=".32" cy=".28" r=".8"><stop offset="0" stop-color="#fff6b0"/><stop offset=".3" stop-color="#dcb400"/><stop offset=".75" stop-color="#a07800"/><stop offset="1" stop-color="#5a4200"/></radialGradient>
<linearGradient id="ff" x1="0" y1="0" x2="0" y2="1"><stop offset="0" stop-color="#d8bc8c"/><stop offset="1" stop-color="#c09868"/></linearGradient>
<filter id="sb" x="-50%" y="-50%" width="200%" height="200%"><feGaussianBlur stdDeviation=".9"/></filter></defs>
<path d="M23.5 27 L30.5 21.5 L30.5 26.5 L25 29.5z" fill="#606060" opacity=".55" filter="url(#sb)"/>
<path d="M5 15.5 L12 11.5 L24.7 14.5 L17 18.5z" fill="#9a7850"/>
<path d="M5 15.3 L1.5 9.5 L11 10.2 L12.5 11.5z" fill="#e0c89e"/>
<path d="M13 11.5 L27.5 9 L31 12.8 L24.7 14.5z" fill="#d6ba8e"/>
<circle cx="15" cy="9.8" r="6.8" fill="url(#cg)" stroke="#5a4400" stroke-width=".5"/>
<path d="M11.2 11.6h8.3M15.6 6.4v8.2" stroke="#5a3800" stroke-width="1.1" opacity=".8"/>
<path d="M10.7 10.6h8.3M14.7 5.9v8.2" stroke="#ffe400" stroke-width="1.2"/>
<path d="M5 15.5 L17 18.5 L17 28.5 L5 24.5z" fill="url(#ff)"/>
<path d="M17 18.5 L24.7 14.5 L24.7 25.5 L17 28.5z" fill="#ad8752"/>
<path d="M5 15.5 L0.5 17.5 L12 21 L17 18.5z" fill="#e0c89c"/>
<path d="M24.7 14.5 L31.8 15.5 L22.5 20 L17 18.5z" fill="#ccb084"/></svg>
<div class="t" style="left:300px;top:287px;font-size:12px;color:#000;transform:scaleX(0.9091);">WMPNSSCI</div>
<svg class="a" style="left:314px;top:343px;" width="32" height="32" viewBox="0 0 32 32"><defs><radialGradient id="cg" cx=".32" cy=".28" r=".8"><stop offset="0" stop-color="#fff6b0"/><stop offset=".3" stop-color="#dcb400"/><stop offset=".75" stop-color="#a07800"/><stop offset="1" stop-color="#5a4200"/></radialGradient>
<linearGradient id="ff" x1="0" y1="0" x2="0" y2="1"><stop offset="0" stop-color="#d8bc8c"/><stop offset="1" stop-color="#c09868"/></linearGradient>
<filter id="sb" x="-50%" y="-50%" width="200%" height="200%"><feGaussianBlur stdDeviation=".9"/></filter></defs>
<path d="M23.5 27 L30.5 21.5 L30.5 26.5 L25 29.5z" fill="#606060" opacity=".55" filter="url(#sb)"/>
<path d="M5 15.5 L12 11.5 L24.7 14.5 L17 18.5z" fill="#9a7850"/>
<path d="M5 15.3 L1.5 9.5 L11 10.2 L12.5 11.5z" fill="#e0c89e"/>
<path d="M13 11.5 L27.5 9 L31 12.8 L24.7 14.5z" fill="#d6ba8e"/>
<circle cx="15" cy="9.8" r="6.8" fill="url(#cg)" stroke="#5a4400" stroke-width=".5"/>
<path d="M11.2 11.6h8.3M15.6 6.4v8.2" stroke="#5a3800" stroke-width="1.1" opacity=".8"/>
<path d="M10.7 10.6h8.3M14.7 5.9v8.2" stroke="#ffe400" stroke-width="1.2"/>
<path d="M5 15.5 L17 18.5 L17 28.5 L5 24.5z" fill="url(#ff)"/>
<path d="M17 18.5 L24.7 14.5 L24.7 25.5 L17 28.5z" fill="#ad8752"/>
<path d="M5 15.5 L0.5 17.5 L12 21 L17 18.5z" fill="#e0c89c"/>
<path d="M24.7 14.5 L31.8 15.5 L22.5 20 L17 18.5z" fill="#ccb084"/></svg>
<div class="t" style="left:289px;top:380px;font-size:12px;color:#000;transform:scaleX(0.9469);">WorkspacePol...</div>
<svg class="a" style="left:314px;top:436px;" width="32" height="32" viewBox="0 0 32 32"><defs><radialGradient id="cg" cx=".32" cy=".28" r=".8"><stop offset="0" stop-color="#fff6b0"/><stop offset=".3" stop-color="#dcb400"/><stop offset=".75" stop-color="#a07800"/><stop offset="1" stop-color="#5a4200"/></radialGradient>
<linearGradient id="ff" x1="0" y1="0" x2="0" y2="1"><stop offset="0" stop-color="#d8bc8c"/><stop offset="1" stop-color="#c09868"/></linearGradient>
<filter id="sb" x="-50%" y="-50%" width="200%" height="200%"><feGaussianBlur stdDeviation=".9"/></filter></defs>
<path d="M23.5 27 L30.5 21.5 L30.5 26.5 L25 29.5z" fill="#606060" opacity=".55" filter="url(#sb)"/>
<path d="M5 15.5 L12 11.5 L24.7 14.5 L17 18.5z" fill="#9a7850"/>
<path d="M5 15.3 L1.5 9.5 L11 10.2 L12.5 11.5z" fill="#e0c89e"/>
<path d="M13 11.5 L27.5 9 L31 12.8 L24.7 14.5z" fill="#d6ba8e"/>
<circle cx="15" cy="9.8" r="6.8" fill="url(#cg)" stroke="#5a4400" stroke-width=".5"/>
<path d="M11.2 11.6h8.3M15.6 6.4v8.2" stroke="#5a3800" stroke-width="1.1" opacity=".8"/>
<path d="M10.7 10.6h8.3M14.7 5.9v8.2" stroke="#ffe400" stroke-width="1.2"/>
<path d="M5 15.5 L17 18.5 L17 28.5 L5 24.5z" fill="url(#ff)"/>
<path d="M17 18.5 L24.7 14.5 L24.7 25.5 L17 28.5z" fill="#ad8752"/>
<path d="M5 15.5 L0.5 17.5 L12 21 L17 18.5z" fill="#e0c89c"/>
<path d="M24.7 14.5 L31.8 15.5 L22.5 20 L17 18.5z" fill="#ccb084"/></svg>
<div class="a" style="left:312px;top:471px;width:37px;height:17px;background:#e8e8e8;"></div>
<div class="t" style="left:314px;top:473px;font-size:12px;color:#000;transform:scaleX(0.9341);">WSAA</div>
<svg class="a" style="left:314px;top:529px;" width="32" height="32" viewBox="0 0 32 32"><defs><radialGradient id="cg" cx=".32" cy=".28" r=".8"><stop offset="0" stop-color="#fff6b0"/><stop offset=".3" stop-color="#dcb400"/><stop offset=".75" stop-color="#a07800"/><stop offset="1" stop-color="#5a4200"/></radialGradient>
<linearGradient id="ff" x1="0" y1="0" x2="0" y2="1"><stop offset="0" stop-color="#d8bc8c"/><stop offset="1" stop-color="#c09868"/></linearGradient>
<filter id="sb" x="-50%" y="-50%" width="200%" height="200%"><feGaussianBlur stdDeviation=".9"/></filter></defs>
<path d="M23.5 27 L30.5 21.5 L30.5 26.5 L25 29.5z" fill="#606060" opacity=".55" filter="url(#sb)"/>
<path d="M5 15.5 L12 11.5 L24.7 14.5 L17 18.5z" fill="#9a7850"/>
<path d="M5 15.3 L1.5 9.5 L11 10.2 L12.5 11.5z" fill="#e0c89e"/>
<path d="M13 11.5 L27.5 9 L31 12.8 L24.7 14.5z" fill="#d6ba8e"/>
<circle cx="15" cy="9.8" r="6.8" fill="url(#cg)" stroke="#5a4400" stroke-width=".5"/>
<path d="M11.2 11.6h8.3M15.6 6.4v8.2" stroke="#5a3800" stroke-width="1.1" opacity=".8"/>
<path d="M10.7 10.6h8.3M14.7 5.9v8.2" stroke="#ffe400" stroke-width="1.2"/>
<path d="M5 15.5 L17 18.5 L17 28.5 L5 24.5z" fill="url(#ff)"/>
<path d="M17 18.5 L24.7 14.5 L24.7 25.5 L17 28.5z" fill="#ad8752"/>
<path d="M5 15.5 L0.5 17.5 L12 21 L17 18.5z" fill="#e0c89c"/>
<path d="M24.7 14.5 L31.8 15.5 L22.5 20 L17 18.5z" fill="#ccb084"/></svg>
<div class="a" style="left:284px;top:565px;width:371px;height:16px;background:#f0f0f0;"></div>
<div class="a" style="left:301px;top:565px;width:90px;height:15px;background:#cdcdcd;"></div>
<svg class="a" style="left:289px;top:569px;" width="6" height="8" viewBox="0 0 6 8"><path d="M5 .6l-3.4 3.4 3.4 3.4" fill="none" stroke="#4a4a4a" stroke-width="1.8"/></svg>
<div class="a" style="left:676px;top:94px;width:235px;height:488px;background:#fff;border-top:2px solid #6d6d6d;border-left:2px solid #6d6d6d;border-right:1px solid #e3e3e3;border-bottom:1px solid #e3e3e3"></div>
<div class="a" style="left:678px;top:96px;width:233px;height:20px;background:#f0f0f0;"></div>
<div class="a" style="left:678px;top:116px;width:233px;height:1px;background:#a0a0a0;"></div>
<div class="t" style="left:683px;top:101px;font-size:12px;color:#000;font-weight:bold;transform:scaleX(0.9092);-webkit-text-stroke:0">Acciones</div>
<div class="a" style="left:678px;top:118px;width:233px;height:25px;background:linear-gradient(#c6daf0,#a9c5e6);"></div>
<div class="t" style="left:685px;top:125px;font-size:12px;color:#000;">Configuraci&oacute;n DCOM</div>
<svg class="a" style="left:893px;top:128px;" width="10" height="6" viewBox="0 0 10 6"><path d="M0 5.5L5 .5l5 5z" fill="#000"/></svg>
<div class="t" style="left:707px;top:149px;font-size:12px;color:#000;transform:scaleX(1.0084);">Acciones adicionales</div>
<svg class="a" style="left:897px;top:150px;" width="6" height="10" viewBox="0 0 6 10"><path d="M.5 0l5 5-5 5z" fill="#000"/></svg>
<div class="a" style="left:379px;top:137px;width:400px;height:498px;background:#f0f0f0;border:1px solid #a0a0a0;box-shadow:0 3px 12px 2px rgba(0,0,0,.16)"></div>
<div class="a" style="left:380px;top:138px;width:398px;height:30px;background:#fff;"></div>
<div class="t" style="left:388px;top:147px;font-size:12px;color:#999;transform:scaleX(0.9510);">Propiedades: WSAA</div>
<svg class="a" style="left:707px;top:147px;" width="7" height="11" viewBox="0 0 7 11"><path d="M.8 2.8C.8 1.3 1.8.6 3 .6s2.3.7 2.3 2.1c0 1.6-1.9 2-1.9 3.8v1.1" fill="none" stroke="#8c8c8c" stroke-width="1.1"/><rect x="2.6" y="8.6" width="1.5" height="1.4" fill="#8c8c8c"/></svg>
<svg class="a" style="left:750px;top:147px;" width="11" height="11" viewBox="0 0 11 11"><path d="M.5 .5l10 10M10.5 .5l-10 10" stroke="#8c8c8c" stroke-width="1.1"/></svg>
<div class="a" style="left:386px;top:195px;width:384px;height:402px;border:1px solid #d9d9d9;background:#fff;"></div>
<div class="a" style="left:388px;top:177px;width:49px;height:19px;background:#f0f0f0;border:1px solid #d9d9d9"></div>
<div class="t" style="left:394px;top:181px;font-size:12px;color:#000;transform:scaleX(0.8621);">General</div>
<div class="a" style="left:436px;top:177px;width:60px;height:19px;background:#f0f0f0;border:1px solid #d9d9d9"></div>
<div class="t" style="left:444px;top:181px;font-size:12px;color:#000;transform:scaleX(0.8823);">Ubicaci&oacute;n</div>
<div class="a" style="left:558px;top:177px;width:54px;height:19px;background:#f0f0f0;border:1px solid #d9d9d9"></div>
<div class="t" style="left:562.5px;top:181px;font-size:12px;color:#000;transform:scaleX(0.8368);">Extremos</div>
<div class="a" style="left:611px;top:177px;width:56px;height:19px;background:#f0f0f0;border:1px solid #d9d9d9"></div>
<div class="t" style="left:618px;top:181px;font-size:12px;color:#000;transform:scaleX(0.8712);">Identidad</div>
<div class="a" style="left:495px;top:175px;width:64px;height:21px;background:#fff;border:1px solid #d9d9d9;border-bottom:none"></div>
<div class="t" style="left:503px;top:179px;font-size:12px;color:#000;transform:scaleX(0.8775);">Seguridad</div>
<div class="a" style="left:411px;top:218px;width:336px;height:82px;border:1px solid #dcdcdc;"></div>
<div class="a" style="left:417px;top:212px;width:149px;height:12px;background:#fff;"></div>
<div class="t" style="left:420px;top:213px;font-size:12px;color:#000;transform:scaleX(0.8752);">Permisos de inicio y activaci&oacute;n</div>
<svg class="a" style="left:422px;top:239px;" width="13" height="13" viewBox="0 0 13 13"><circle cx="6.5" cy="6.5" r="6" fill="#fff" stroke="#333" stroke-width="1"/></svg>
<div class="t" style="left:438px;top:240px;font-size:12px;color:#000;transform:scaleX(0.8508);">Usar predeterminados</div>
<svg class="a" style="left:422px;top:268px;" width="13" height="13" viewBox="0 0 13 13"><circle cx="6.5" cy="6.5" r="6" fill="#fff" stroke="#333" stroke-width="1"/><circle cx="6.5" cy="6.5" r="3.5" fill="#333"/></svg>
<div class="t" style="left:438px;top:269px;font-size:12px;color:#000;transform:scaleX(0.8532);">Personalizados</div>
<div class="a" style="left:663px;top:268px;width:73px;height:21px;background:#e1e1e1;border:1px solid #adadad"></div>
<div class="t" style="left:681.75px;top:273px;font-size:12px;color:#000;transform:scaleX(0.8728);">Editar...</div>
<div class="a" style="left:411px;top:330px;width:336px;height:82px;border:1px solid #dcdcdc;"></div>
<div class="a" style="left:417px;top:324px;width:99px;height:12px;background:#fff;"></div>
<div class="t" style="left:420px;top:325px;font-size:12px;color:#000;transform:scaleX(0.8609);">Permisos de acceso</div>
<svg class="a" style="left:422px;top:349px;" width="13" height="13" viewBox="0 0 13 13"><circle cx="6.5" cy="6.5" r="6" fill="#fff" stroke="#333" stroke-width="1"/><circle cx="6.5" cy="6.5" r="3.5" fill="#333"/></svg>
<div class="t" style="left:438px;top:350px;font-size:12px;color:#000;transform:scaleX(0.8508);">Usar predeterminados</div>
<svg class="a" style="left:422px;top:378px;" width="13" height="13" viewBox="0 0 13 13"><circle cx="6.5" cy="6.5" r="6" fill="#fff" stroke="#333" stroke-width="1"/></svg>
<div class="t" style="left:438px;top:379px;font-size:12px;color:#000;transform:scaleX(0.8532);">Personalizados</div>
<div class="a" style="left:411px;top:442px;width:336px;height:82px;border:1px solid #dcdcdc;"></div>
<div class="a" style="left:417px;top:436px;width:131px;height:12px;background:#fff;"></div>
<div class="t" style="left:420px;top:437px;font-size:12px;color:#000;transform:scaleX(0.8841);">Permisos de configuraci&oacute;n</div>
<svg class="a" style="left:422px;top:465px;" width="13" height="13" viewBox="0 0 13 13"><circle cx="6.5" cy="6.5" r="6" fill="#fff" stroke="#333" stroke-width="1"/></svg>
<div class="t" style="left:438px;top:466px;font-size:12px;color:#000;transform:scaleX(0.8508);">Usar predeterminados</div>
<svg class="a" style="left:422px;top:491px;" width="13" height="13" viewBox="0 0 13 13"><circle cx="6.5" cy="6.5" r="6" fill="#fff" stroke="#333" stroke-width="1"/><circle cx="6.5" cy="6.5" r="3.5" fill="#333"/></svg>
<div class="t" style="left:438px;top:492px;font-size:12px;color:#000;transform:scaleX(0.8532);">Personalizados</div>
<div class="t" style="left:401px;top:563px;font-size:12px;color:#000;transform:scaleX(0.8623);">Obtener m&aacute;s informaci&oacute;n sobre la configuraci&oacute;n</div>
<div class="a" style="left:487px;top:302px;width:363px;height:450px;background:#f0f0f0;border:1px solid #1883d7;box-shadow:0 3px 14px 3px rgba(0,0,0,.2)"></div>
<div class="a" style="left:488px;top:303px;width:361px;height:30px;background:#fff;"></div>
<div class="t" style="left:496px;top:312px;font-size:12px;color:#000;transform:scaleX(0.9756);">Permisos de inicio</div>
<svg class="a" style="left:778px;top:312px;" width="7" height="11" viewBox="0 0 7 11"><path d="M.8 2.8C.8 1.3 1.8.6 3 .6s2.3.7 2.3 2.1c0 1.6-1.9 2-1.9 3.8v1.1" fill="none" stroke="#000" stroke-width="1.2"/><rect x="2.6" y="8.6" width="1.6" height="1.4" fill="#000"/></svg>
<svg class="a" style="left:821px;top:312px;" width="11" height="11" viewBox="0 0 11 11"><path d="M.5 .5l10 10M10.5 .5l-10 10" stroke="#000" stroke-width="1"/></svg>
<div class="a" style="left:494px;top:360px;width:347px;height:354px;border:1px solid #d9d9d9;background:#fff;"></div>
<div class="a" style="left:494px;top:340px;width:64px;height:21px;background:#fff;border:1px solid #d9d9d9;border-bottom:none"></div>
<div class="t" style="left:502px;top:344px;font-size:12px;color:#000;transform:scaleX(0.8775);">Seguridad</div>
<div class="t" style="left:509px;top:370px;font-size:12px;color:#000;transform:scaleX(0.8662);">Nombres de grupos o usuarios:</div>
<div class="a" style="left:509px;top:386px;width:320px;height:103px;border:1px solid #828790;background:#fff;"></div>
<div class="a" style="left:531px;top:388px;width:297px;height:17px;background:#0078d7;"></div>
<svg class="a" style="left:514px;top:389px;" width="16" height="16" viewBox="0 0 16 16"><circle cx="5" cy="4" r="3" fill="#4a8ea8"/><path d="M1 13.5v-2.5c0-2.2 1.8-3.5 4-3.5s4 1.3 4 3.5v2.5z" fill="#3f8a9a"/>
<circle cx="11.5" cy="4.3" r="3" fill="#2a6aa8"/><path d="M7 14.5v-2.5c0-2.4 2-3.7 4.5-3.7s4.5 1.3 4.5 3.7v2.5z" fill="#3a80c8"/></svg>
<svg class="a" style="left:514px;top:406px;" width="16" height="16" viewBox="0 0 16 16"><circle cx="5" cy="4.3" r="3" fill="#f0c8a0"/><path d="M2 4.5c0-3 1.5-3.8 3-3.8s3 .8 3 2.5c-1 0-2.5-.5-3.5-1.2C4 3 3.5 4.5 3.5 6z" fill="#d8c078"/>
<path d="M1 13.5v-2.5c0-2.2 1.8-3.5 4-3.5s4 1.3 4 3.5v2.5z" fill="#7ab050"/>
<circle cx="11.5" cy="4.5" r="3" fill="#a87048"/><path d="M8.5 4.5c0-2.5 1.3-3.5 3-3.5s3 1 3 3c-1.5-1-4-1-6 .5z" fill="#383838"/>
<path d="M7 14.5v-2.5c0-2.4 2-3.7 4.5-3.7s4.5 1.3 4.5 3.7v2.5z" fill="#7aa8d8"/><path d="M10.5 9l1 2 1-2" stroke="#fff" stroke-width=".8" fill="none"/></svg>
<svg class="a" style="left:514px;top:423px;" width="16" height="16" viewBox="0 0 16 16"><circle cx="5" cy="4.3" r="3" fill="#f0c8a0"/><path d="M2 4.5c0-3 1.5-3.8 3-3.8s3 .8 3 2.5c-1 0-2.5-.5-3.5-1.2C4 3 3.5 4.5 3.5 6z" fill="#d8c078"/>
<path d="M1 13.5v-2.5c0-2.2 1.8-3.5 4-3.5s4 1.3 4 3.5v2.5z" fill="#7ab050"/>
<circle cx="11.5" cy="4.5" r="3" fill="#a87048"/><path d="M8.5 4.5c0-2.5 1.3-3.5 3-3.5s3 1 3 3c-1.5-1-4-1-6 .5z" fill="#383838"/>
<path d="M7 14.5v-2.5c0-2.4 2-3.7 4.5-3.7s4.5 1.3 4.5 3.7v2.5z" fill="#7aa8d8"/><path d="M10.5 9l1 2 1-2" stroke="#fff" stroke-width=".8" fill="none"/></svg>
<div class="t" style="left:533px;top:391px;font-size:12px;color:#fff;transform:scaleX(0.8818);">SYSTEM</div>
<div class="t" style="left:533px;top:408px;font-size:12px;color:#000;transform:scaleX(0.8613);">Administradores (s5ultra\Administradores)</div>
<div class="t" style="left:533px;top:425px;font-size:12px;color:#000;transform:scaleX(0.8887);">INTERACTIVE</div>
<div class="a" style="left:673px;top:496px;width:73px;height:21px;background:#e1e1e1;border:1px solid #adadad"></div>
<div class="t" style="left:687.0px;top:501px;font-size:12px;color:#000;transform:scaleX(0.8651);">Agregar...</div>
<div class="a" style="left:754px;top:496px;width:73px;height:21px;background:#e1e1e1;border:1px solid #adadad"></div>
<div class="t" style="left:776.0px;top:501px;font-size:12px;color:#000;transform:scaleX(0.8876);">Quitar</div>
<div class="t" style="left:509px;top:532px;font-size:12px;color:#000;transform:scaleX(0.8605);">Permisos de SYSTEM</div>
<div class="t" style="left:714px;top:532px;font-size:12px;color:#000;transform:scaleX(0.8466);">Permitir</div>
<div class="t" style="left:771px;top:532px;font-size:12px;color:#000;transform:scaleX(0.9124);">Denegar</div>
<div class="a" style="left:509px;top:547px;width:320px;height:138px;border:1px solid #646464;background:#fff;"></div>
<div class="t" style="left:521px;top:554px;font-size:12px;color:#000;transform:scaleX(0.8807);">Ejecuci&oacute;n local</div>
<svg class="a" style="left:720px;top:553px;" width="13" height="13" viewBox="0 0 13 13"><rect x=".5" y=".5" width="12" height="12" fill="#fff" stroke="#333"/><path d="M1.8 6.5l3.4 3.1 5.8-6.3" fill="none" stroke="#333" stroke-width="1.1"/></svg>
<svg class="a" style="left:780px;top:553px;" width="13" height="13" viewBox="0 0 13 13"><rect x=".5" y=".5" width="12" height="12" fill="#fff" stroke="#333"/></svg>
<div class="t" style="left:521px;top:572px;font-size:12px;color:#000;transform:scaleX(0.8630);">Ejecuci&oacute;n remota</div>
<svg class="a" style="left:720px;top:571px;" width="13" height="13" viewBox="0 0 13 13"><rect x=".5" y=".5" width="12" height="12" fill="#fff" stroke="#333"/><path d="M1.8 6.5l3.4 3.1 5.8-6.3" fill="none" stroke="#333" stroke-width="1.1"/></svg>
<svg class="a" style="left:780px;top:571px;" width="13" height="13" viewBox="0 0 13 13"><rect x=".5" y=".5" width="12" height="12" fill="#fff" stroke="#333"/></svg>
<div class="t" style="left:521px;top:590px;font-size:12px;color:#000;transform:scaleX(0.8887);">Activaci&oacute;n local</div>
<svg class="a" style="left:720px;top:589px;" width="13" height="13" viewBox="0 0 13 13"><rect x=".5" y=".5" width="12" height="12" fill="#fff" stroke="#333"/><path d="M1.8 6.5l3.4 3.1 5.8-6.3" fill="none" stroke="#333" stroke-width="1.1"/></svg>
<svg class="a" style="left:780px;top:589px;" width="13" height="13" viewBox="0 0 13 13"><rect x=".5" y=".5" width="12" height="12" fill="#fff" stroke="#333"/></svg>
<div class="t" style="left:521px;top:608px;font-size:12px;color:#000;transform:scaleX(0.8756);">Activaci&oacute;n remota</div>
<svg class="a" style="left:720px;top:607px;" width="13" height="13" viewBox="0 0 13 13"><rect x=".5" y=".5" width="12" height="12" fill="#fff" stroke="#333"/><path d="M1.8 6.5l3.4 3.1 5.8-6.3" fill="none" stroke="#333" stroke-width="1.1"/></svg>
<svg class="a" style="left:780px;top:607px;" width="13" height="13" viewBox="0 0 13 13"><rect x=".5" y=".5" width="12" height="12" fill="#fff" stroke="#333"/></svg>
<div class="a" style="left:688px;top:722px;width:73px;height:21px;background:#e1e1e1;border:2px solid #0078d7"></div>
<div class="t" style="left:706.5px;top:727px;font-size:12px;color:#000;transform:scaleX(0.8707);">Aceptar</div>
<div class="a" style="left:769px;top:722px;width:73px;height:21px;background:#e1e1e1;border:1px solid #adadad"></div>
<div class="t" style="left:784.5px;top:727px;font-size:12px;color:#000;transform:scaleX(0.8744);">Cancelar</div>
</body></html>
